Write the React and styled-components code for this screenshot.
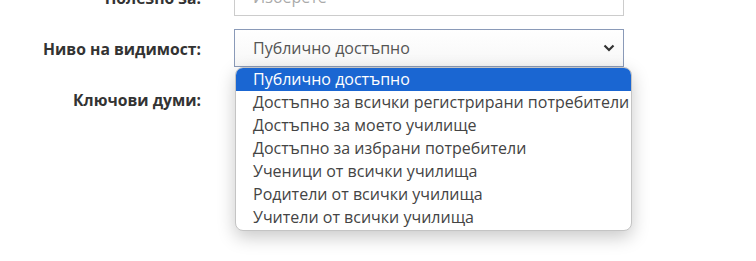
import React from 'react'
import styled, { createGlobalStyle } from 'styled-components'

const options = [
  'Публично достъпно',
  'Достъпно за всички регистрирани потребители',
  'Достъпно за моето училище',
  'Достъпно за избрани потребители',
  'Ученици от всички училища',
  'Родители от всички училища',
  'Учители от всички училища',
]

const App = () => {
  return (
    <>
      <Global />
      <Page>
        <Form>
          <Row>
            <Label>Полезно за:</Label>
            <Field>
              <Input placeholder='Изберете' />
            </Field>
          </Row>
          <Row>
            <Label>Ниво на видимост:</Label>
            <Field>
              <Select>
                <span>Публично достъпно</span>
                <svg width="12" height="8" viewBox="0 0 12 8">
                  <path d="M1.5 1.5 L6 6 L10.5 1.5" fill="none" stroke="#333" strokeWidth="2.2" />
                </svg>
              </Select>
              <Menu>
                {options.map((o, i) => (
                  <Option key={o} active={i === 0}>{o}</Option>
                ))}
              </Menu>
            </Field>
          </Row>
          <Row>
            <Label>Ключови думи:</Label>
            <Field />
          </Row>
        </Form>
      </Page>
    </>
  )
}

export default App

const Global = createGlobalStyle`
  body {
    margin: 0;
    background: #fff;
    font-family: "Open Sans", "Liberation Sans", sans-serif;
  }
`;

const Page = styled.div`
  width: 756px;
  height: 261px;
  overflow: hidden;
`;

const Form = styled.div`
  display: flex;
  flex-direction: column;
  gap: 13px;
  margin-top: -22px;
`;

const Row = styled.div`
  display: grid;
  grid-template-columns: 201px 390px;
  column-gap: 33px;
  align-items: center;
  height: 38px;
`;

const Label = styled.div`
  text-align: right;
  font-weight: 700;
  font-size: 15.7px;
  color: #333;
  padding-top: 1px;
`;

const Field = styled.div`
  position: relative;
  height: 38px;
`;

const Input = styled.input`
  box-sizing: border-box;
  width: 100%;
  height: 38px;
  border: 1px solid #ccc;
  padding: 0 18px;
  font-family: inherit;
  font-size: 16px;
  color: #555;
  &::placeholder {
    color: #aaa;
  }
`;

const Select = styled.div`
  box-sizing: border-box;
  height: 38px;
  border: 1px solid #8a9ab8;
  padding: 0 8px 0 18px;
  display: flex;
  align-items: center;
  justify-content: space-between;
  font-size: 16px;
  color: #555;
  background: linear-gradient(#fff, #f7f7f7);
`;

const Menu = styled.div`
  position: absolute;
  top: 38px;
  left: 1px;
  width: 397px;
  box-sizing: border-box;
  background: #fff;
  border: 1px solid #c4c4c4;
  border-radius: 8px;
  overflow: hidden;
  box-shadow: 0 6px 18px rgba(0, 0, 0, 0.22);
  display: flex;
  flex-direction: column;
  padding-bottom: 1px;
`;

const Option = styled.div`
  height: 23px;
  line-height: 23px;
  padding-left: 17px;
  font-size: 16px;
  white-space: nowrap;
  color: ${p => (p.active ? '#fff' : '#444')};
  background: ${p => (p.active ? '#1a66d2' : 'transparent')};
`;
